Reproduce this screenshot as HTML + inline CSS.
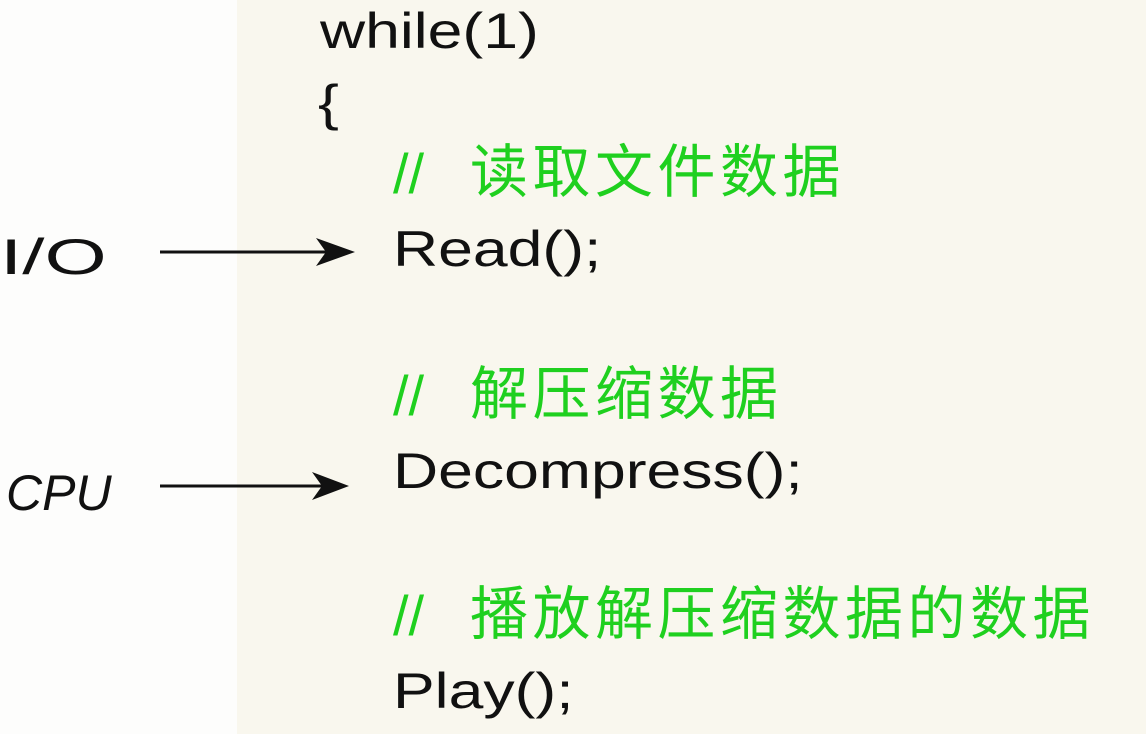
<!DOCTYPE html>
<html><head><meta charset="utf-8"><style>
body{margin:0;width:1146px;height:734px;background:#fdfdfc;position:relative;overflow:hidden;font-family:"Liberation Sans","Noto Sans CJK SC",sans-serif;}
.panel{position:absolute;left:237px;top:0;width:909px;height:734px;background:#f9f7ee;}
.t{position:absolute;white-space:nowrap;color:#111;font-size:50px;line-height:1;transform:scaleX(1.25);transform-origin:0 0;}
.g{color:#1fd01f;font-size:56px;transform:none;}
.c{color:#1fd01f;font-size:58px;letter-spacing:4.5px;transform:none;}
</style></head><body>
<div class="panel"></div>
<div class="t" style="left:320px;top:6px">while(1)</div>
<div class="t" style="left:318px;top:78px">{</div>
<div class="t g" style="left:393px;top:146px">//</div>
<div class="t c" style="left:470px;top:144px">读取文件数据</div>
<div class="t" style="left:393px;top:224px">Read();</div>
<div class="t g" style="left:393px;top:368px">//</div>
<div class="t c" style="left:470px;top:366px">解压缩数据</div>
<div class="t" style="left:393px;top:446px">Decompress();</div>
<div class="t g" style="left:393px;top:588px">//</div>
<div class="t c" style="left:470px;top:586px">播放解压缩数据的数据</div>
<div class="t" style="left:393px;top:666px">Play();</div>
<div class="t" style="left:0px;top:232px;transform:scaleX(1.6)">I/O</div>
<div class="t" style="left:6px;top:468px;font-style:italic;transform:none">CPU</div>
<svg style="position:absolute;left:0;top:0" width="1146" height="734">
<line x1="160" y1="252" x2="335" y2="252" stroke="#111" stroke-width="3"/>
<polygon points="355,252 316,238 326,252 316,266" fill="#111"/>
<line x1="160" y1="486" x2="330" y2="486" stroke="#111" stroke-width="3"/>
<polygon points="349,486 312,472 322,486 312,500" fill="#111"/>
</svg>
</body></html>
